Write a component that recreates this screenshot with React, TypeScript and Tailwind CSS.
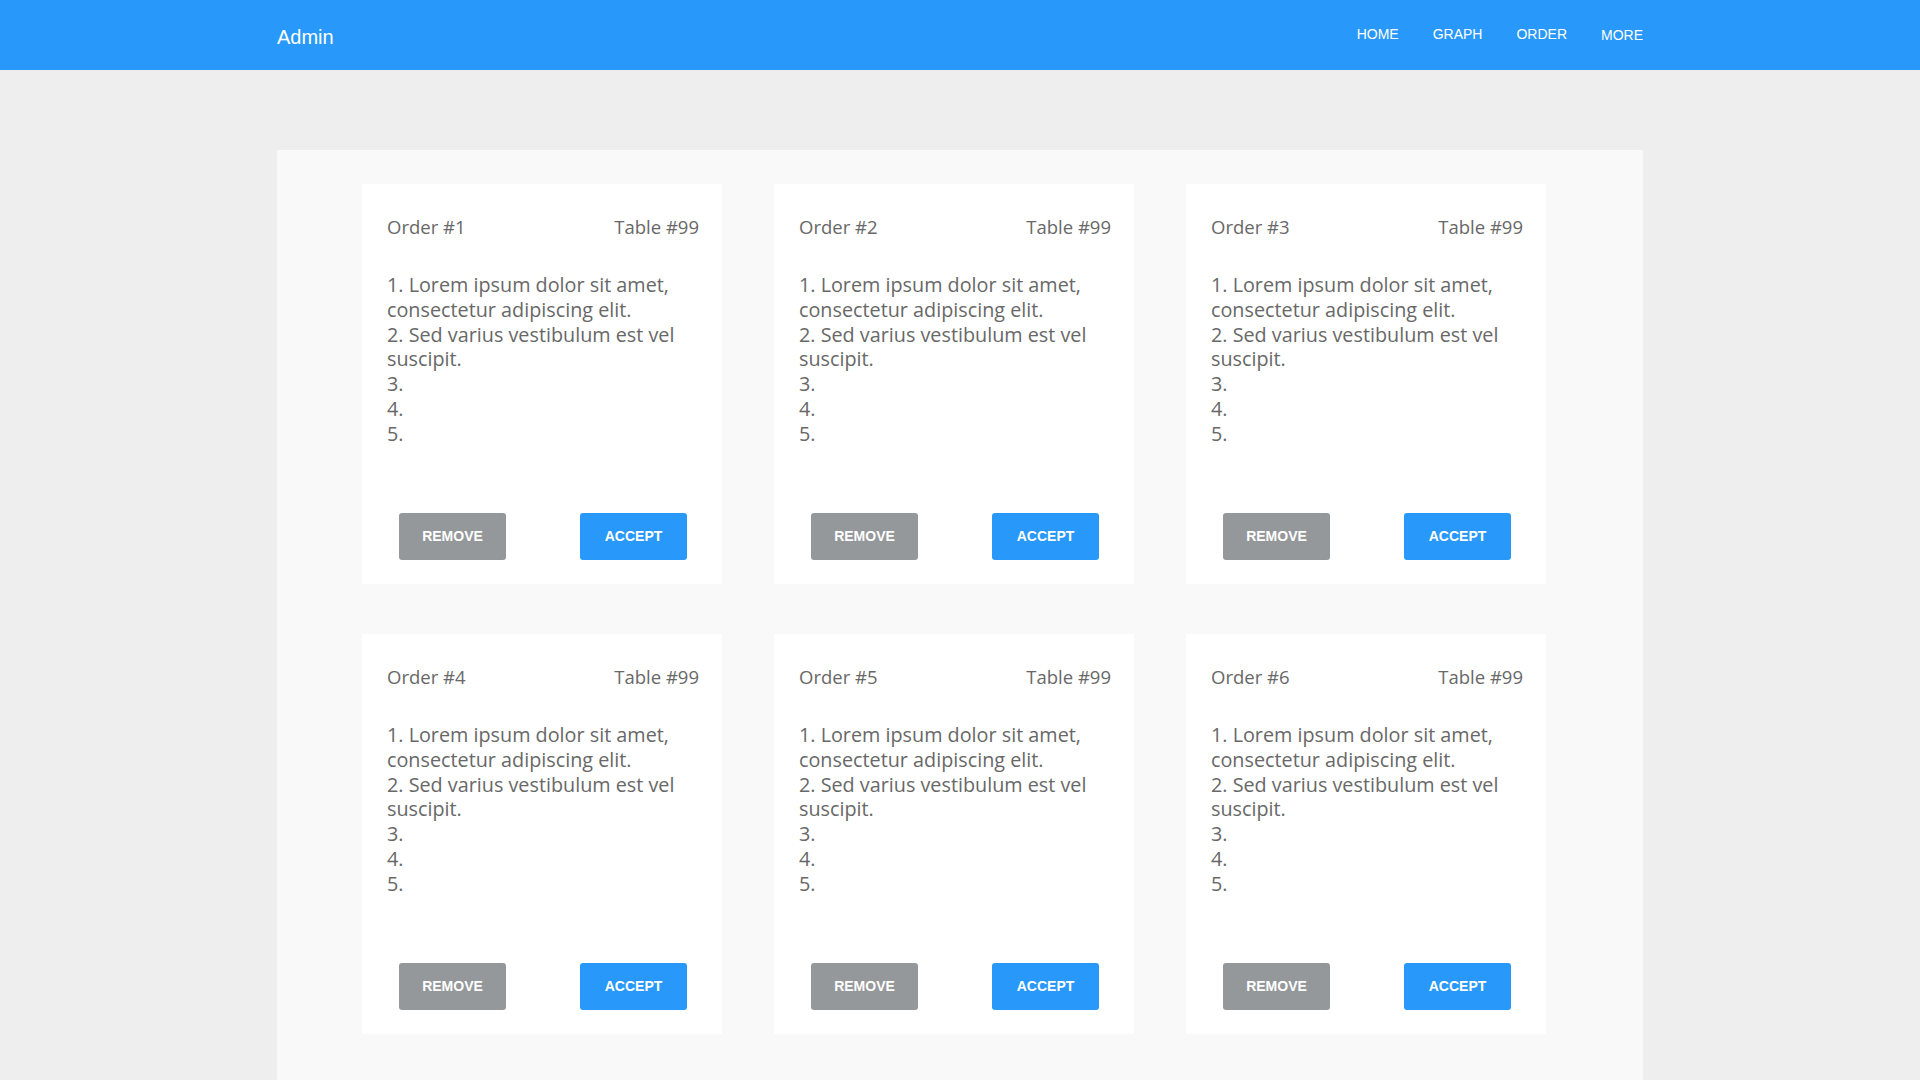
import React from "react";

const orders = [1, 2, 3, 4, 5, 6];

function OrderCard({ n }: { n: number }) {
  return (
    <div className="flex h-[400px] w-[360px] flex-col bg-white pl-[25px] pr-[23px] pt-[31px] pb-[24px] text-[#686868]" style={{ fontFamily: '"Open Sans", "Noto Sans", sans-serif' }}>
      <div className="flex justify-between text-[18.5px] leading-[24px]">
        <span>Order #{n}</span>
        <span>Table #99</span>
      </div>
      <div className="mt-[34px] text-[19.8px] leading-[24.8px]">
        <div>1. Lorem ipsum dolor sit amet, consectetur adipiscing elit.</div>
        <div>2. Sed varius vestibulum est vel suscipit.</div>
        <div>3.</div>
        <div>4.</div>
        <div>5.</div>
      </div>
      <div className="mt-auto flex justify-between px-[12px]" style={{ fontFamily: '"Liberation Sans", Arial, sans-serif' }}>
        <button className="flex h-[47px] w-[107px] items-center justify-center rounded-[3px] bg-[#95989a] text-[14px] font-bold uppercase text-white">
          Remove
        </button>
        <button className="flex h-[47px] w-[107px] items-center justify-center rounded-[3px] bg-[#2899fb] text-[14px] font-bold uppercase text-white">
          Accept
        </button>
      </div>
    </div>
  );
}

export default function App() {
  return (
    <div className="min-h-screen bg-[#eeeeee]" style={{ fontFamily: '"Liberation Sans", Arial, sans-serif' }}>
      <header className="h-[70px] bg-[#2899fb]">
        <div className="mx-auto flex w-[1366px] items-start justify-between pt-[26px] text-white">
          <div className="text-[20px] leading-[23px]">Admin</div>
          <nav className="flex gap-[34px] text-[14px] leading-[16px]">
            <a>HOME</a>
            <a>GRAPH</a>
            <a>ORDER</a>
            <a className="mt-px">MORE</a>
          </nav>
        </div>
      </header>
      <main className="mx-auto mt-[80px] w-[1366px] bg-[#f9f9f9] pl-[85px] pt-[34px] pb-[50px]">
        <div className="grid w-[1184px] grid-cols-[360px_360px_360px] gap-x-[52px] gap-y-[50px]">
          {orders.map((n) => (
            <OrderCard key={n} n={n} />
          ))}
        </div>
      </main>
    </div>
  );
}
